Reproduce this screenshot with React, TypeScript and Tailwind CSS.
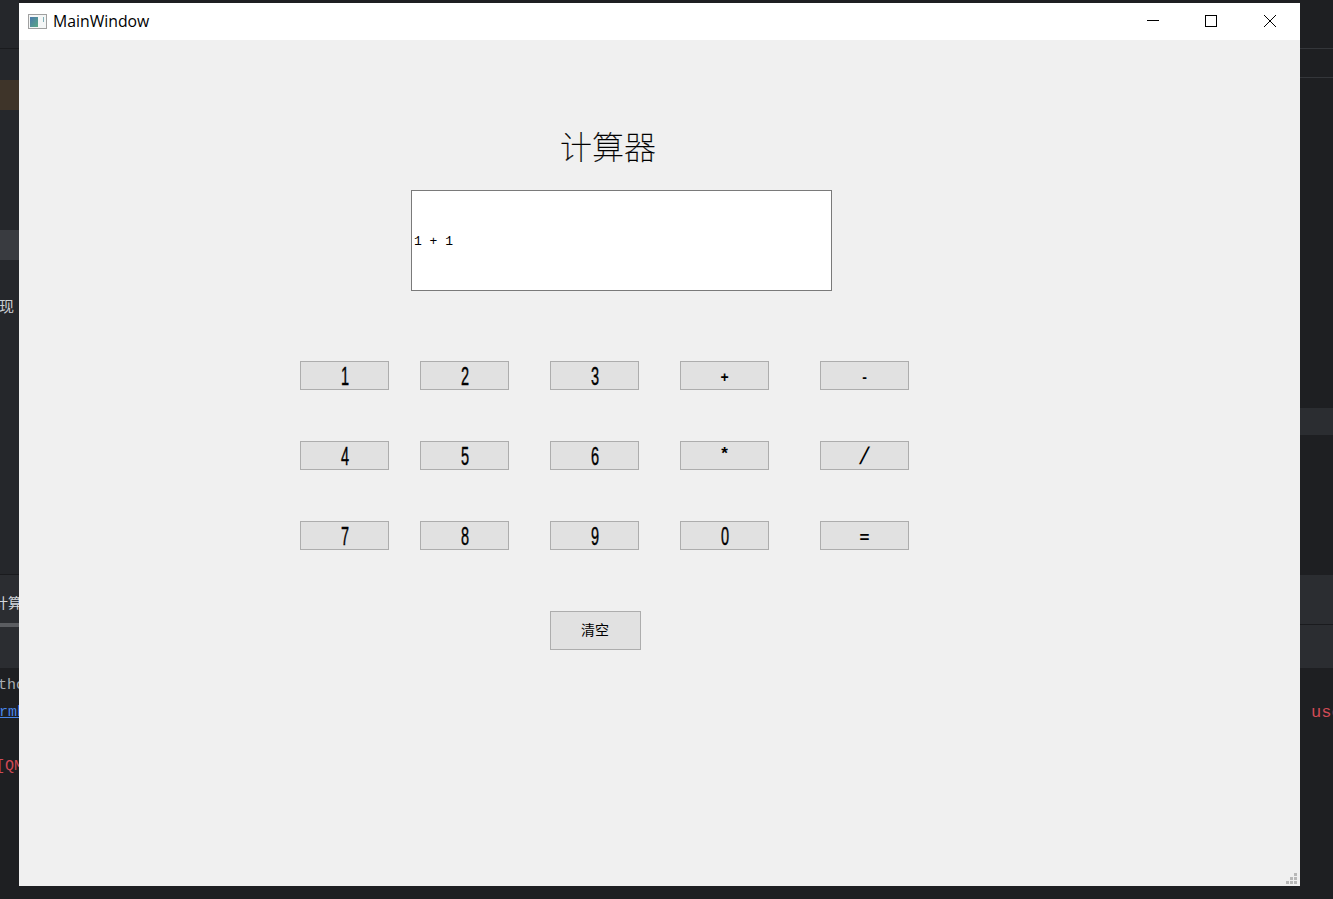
const glyphClass: Record<string, string> = {
  "+": "font-['Liberation_Sans',sans-serif] font-bold text-[14px] leading-none pt-[3px]",
  "-": "font-['Liberation_Sans',sans-serif] font-bold text-[14px] leading-none pt-[3px]",
  "*": "font-['Liberation_Sans',sans-serif] font-bold text-[17px] leading-none pb-[5px]",
  "/": "font-['Liberation_Sans',sans-serif] text-[24px] leading-none inline-block skew-x-[-14deg]",
  "=": "font-['Liberation_Sans',sans-serif] font-bold text-[17px] leading-none pt-[4px]",
};

const digitClass = "font-['Liberation_Sans',sans-serif] inline-block text-[25px] leading-none pt-[1px] scale-x-[0.58] [-webkit-text-stroke:0.4px_black]";

const rows = [
  ["1", "2", "3", "+", "-"],
  ["4", "5", "6", "*", "/"],
  ["7", "8", "9", "0", "="],
];

function CalcButton({ label }: { label: string }) {
  return (
    <button className="w-[89px] h-[29px] bg-[#e1e1e1] border border-[#adadad] flex items-center justify-center text-black overflow-hidden">
      <span className={glyphClass[label] ?? digitClass}>{label}</span>
    </button>
  );
}

function LeftStrip() {
  return (
    <div className="w-[19px] h-full shrink-0 flex flex-col bg-[#25272b] overflow-hidden text-[14px] leading-none">
      <div className="h-[49px] border-b border-[#1a1b1e]" />
      <div className="h-[31px]" />
      <div className="h-[30px] bg-[#3e3429]" />
      <div className="h-[120px]" />
      <div className="h-[30px] bg-[#393b40]" />
      <div className="h-[36px]" />
      <div className="h-[18px] flex items-center text-[#c9cdd3] font-['Noto_Sans_CJK_SC',sans-serif] text-[15px] whitespace-nowrap -ml-[1px]">现</div>
      <div className="h-[261px] border-b border-[#1a1b1e]" />
      <div className="h-[52px] flex flex-col bg-[#2b2d31] pt-[20px]">
        <span className="text-[#d4d7dc] font-['Noto_Sans_CJK_SC',sans-serif] -ml-[6px] whitespace-nowrap h-[14px]">计算</span>
        <div className="h-[4px] bg-[#5b5d61] mt-[14px]" />
      </div>
      <div className="h-[41px] bg-[#2b2d31]" />
      <div className="flex-1 bg-[#1e1f22] font-['Liberation_Mono',monospace] text-[15px] whitespace-nowrap pt-[10px]">
        <div className="h-[27px] text-[#a9adb3] -ml-[2px]">tho</div>
        <div className="h-[27px] text-[#4a86e8] -ml-[1px]"><span className="underline">rmh</span></div>
        <div className="h-[27px]" />
        <div className="h-[27px] text-[#d04a55] -ml-[4px]">[QM</div>
      </div>
    </div>
  );
}

function RightStrip() {
  return (
    <div className="flex-1 h-full flex flex-col bg-[#1e1f22] overflow-hidden">
      <div className="h-[49px] border-b border-[#34363a]" />
      <div className="h-[29px] border-b border-[#34363a]" />
      <div className="h-[330px]" />
      <div className="h-[27px] bg-[#2b2d31]" />
      <div className="h-[140px]" />
      <div className="h-[50px] bg-[#2b2d31] border-b border-[#1a1b1e]" />
      <div className="h-[43px] bg-[#2b2d31]" />
      <div className="h-[36px] flex items-center pl-[11px] font-['Liberation_Mono',monospace] text-[17px] text-[#d04a55] whitespace-nowrap mt-[27px]">use</div>
    </div>
  );
}

export default function App() {
  return (
    <div className="w-[1333px] h-[899px] flex overflow-hidden bg-[#1e1f22]">
      <LeftStrip />
      <div className="w-[1281px] h-full shrink-0 flex flex-col">
        <div className="h-[3px] shrink-0 bg-[#1e1f22]" />
        <div className="h-[37px] shrink-0 bg-white flex items-center">
          <svg width="20" height="16" viewBox="0 0 20 16" className="ml-[9px]">
            <defs>
              <linearGradient id="appIcon" x1="0" y1="0" x2="1" y2="1">
                <stop offset="0" stopColor="#4a78ad" />
                <stop offset="1" stopColor="#5aa884" />
              </linearGradient>
            </defs>
            <rect x="0.5" y="0.5" width="18" height="14" fill="#f4f6f6" stroke="#a0a0a0" />
            <rect x="2" y="3" width="8" height="10" fill="url(#appIcon)" />
            <rect x="15" y="3" width="1" height="5" fill="#7fb0b8" />
          </svg>
          <span className="ml-[5px] font-['Open_Sans',sans-serif] text-[15.8px] text-black">MainWindow</span>
          <div className="ml-auto flex items-center">
            <svg width="58" height="37" viewBox="0 0 58 37"><path d="M22 17.5H34" stroke="#000" /></svg>
            <svg width="58" height="37" viewBox="0 0 58 37"><rect x="22.5" y="12.5" width="11" height="11" fill="none" stroke="#000" /></svg>
            <svg width="59" height="37" viewBox="0 0 59 37"><path d="M23 12L35 24M35 12L23 24" stroke="#000" /></svg>
          </div>
        </div>
        <div className="h-[846px] shrink-0 bg-[#f0f0f0] relative flex flex-col">
          <div className="h-[150px] shrink-0 flex flex-col">
            <div className="mt-[89px] ml-[541px] font-['Liberation_Serif','Noto_Sans_CJK_SC',serif] font-thin text-[32px] leading-[38px] text-black whitespace-nowrap [-webkit-text-stroke:0.3px_black]">计算器</div>
          </div>
          <div className="ml-[392px] w-[421px] h-[101px] shrink-0 bg-white border border-[#7a7a7a] flex items-center pl-[2px] pt-[1px]">
            <span className="font-['Liberation_Mono',monospace] text-[13px] leading-none text-black whitespace-pre">1 + 1</span>
          </div>
          <div className="mt-[70px] ml-[281px] flex flex-col gap-[51px]">
            {rows.map((row, i) => (
              <div key={i} className="flex">
                <CalcButton label={row[0]} />
                <div className="ml-[31px]"><CalcButton label={row[1]} /></div>
                <div className="ml-[41px]"><CalcButton label={row[2]} /></div>
                <div className="ml-[41px]"><CalcButton label={row[3]} /></div>
                <div className="ml-[51px]"><CalcButton label={row[4]} /></div>
              </div>
            ))}
          </div>
          <button className="mt-[61px] ml-[531px] w-[91px] h-[39px] shrink-0 bg-[#e1e1e1] border border-[#adadad] flex items-center justify-center font-['Noto_Sans_CJK_SC',sans-serif] text-[14px] text-black pb-[2px] pr-[1px]">
            清空
          </button>
          {/* size grip */}
          <div className="absolute right-[3px] bottom-[2px] grid grid-cols-3 gap-[1px]">
            {[0, 0, 1, 0, 1, 1, 1, 1, 1].map((on, i) => (
              <div key={i} className={on ? "w-[3px] h-[3px] bg-[#b8b8b8]" : "w-[3px] h-[3px]"} />
            ))}
          </div>
        </div>
        <div className="flex-1 bg-[#1e1f22]" />
      </div>
      <RightStrip />
    </div>
  );
}
